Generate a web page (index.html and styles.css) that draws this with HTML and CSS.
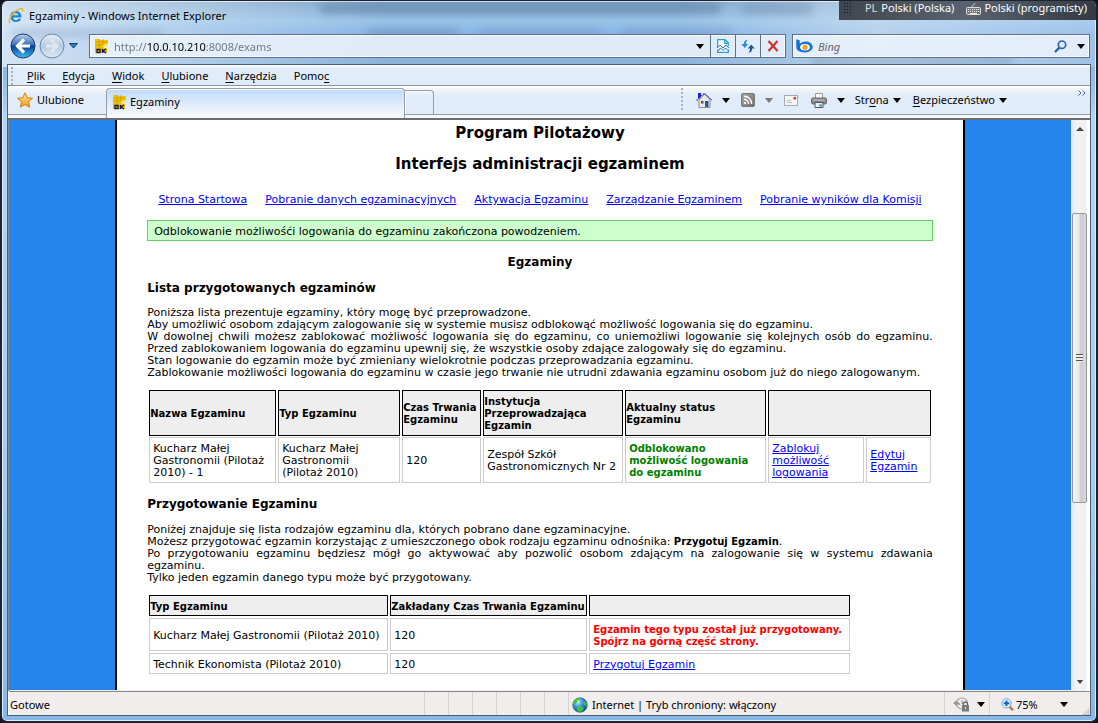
FILE: index.html
```html
<!DOCTYPE html>
<html lang="pl">
<head>
<meta charset="utf-8">
<title>Egzaminy - Windows Internet Explorer</title>
<link rel="stylesheet" href="styles.css">
</head>
<body>
<svg class="defs" width="0" height="0" aria-hidden="true">
  <defs>
    <symbol id="down" viewBox="0 0 8 5"><path d="M0 0h8L4 5z" fill="currentColor"/></symbol>
    <symbol id="oke" viewBox="0 0 16 16">
      <path d="M2 1h5v1h8v4l-4 1v3l-2 5H2z" fill="#f0c400"/>
      <path d="M2 4h12M2 7h9M6 1v9M10 1v6" stroke="#cf9c00" stroke-width=".8"/>
      <path d="M10 7h4v2h-4z" fill="#ffe36a"/>
      <rect x="2" y="10" width="12" height="5" fill="#e8bc00"/>
      <path d="M4 11.500h3v3H4zM9.500 11v4M13 11l-3 2 3 2" fill="none" stroke="#14145a" stroke-width="1.300"/>
    </symbol>
    <linearGradient id="gBack" x1="0" y1="0" x2="0" y2="1"><stop offset="0" stop-color="#b9d2ee"/><stop offset=".45" stop-color="#3a6fb8"/><stop offset=".5" stop-color="#0b3c90"/><stop offset="1" stop-color="#3fc0f5"/></linearGradient>
    <linearGradient id="gFwd" x1="0" y1="0" x2="0" y2="1"><stop offset="0" stop-color="#e6eef8"/><stop offset=".5" stop-color="#b6cbe2"/><stop offset="1" stop-color="#dce9f5"/></linearGradient>
    <linearGradient id="gGrey" x1="0" y1="0" x2="1" y2="1"><stop offset="0" stop-color="#aaa"/><stop offset="1" stop-color="#6d6d6d"/></linearGradient>
    <radialGradient id="gGlobe" cx=".35" cy=".3" r=".8"><stop offset="0" stop-color="#b6e4ff"/><stop offset=".5" stop-color="#2f86d2"/><stop offset="1" stop-color="#0c3d86"/></radialGradient>
    <linearGradient id="gStar" x1="0" y1="0" x2="0" y2="1"><stop offset="0" stop-color="#ffe9a0"/><stop offset="1" stop-color="#f59a10"/></linearGradient>
  </defs>
</svg>
<div class="window">
  <div class="glass" aria-hidden="true"><i class="smudge s1"></i><i class="smudge s2"></i><i class="smudge s3"></i><i class="smudge s4"></i><i class="smudge s5"></i><i class="smudge s6"></i><i class="smudge s7"></i></div>
  <header class="titlebar">
    <svg width="16" height="16" viewBox="0 0 16 16">
      <path d="M13.500 9.500H5.200c.2 3.300 4 3.500 5 1.300h3c-2.300 5.300-10.800 4-10.800-2.400 0-7 11-7.500 11.100 1.100zM5.300 7.300h5.100C10.300 4.400 5.500 4.400 5.300 7.300z" fill="#1b86d8"/>
      <path d="M2.200 15C-1 12.500 5 3.500 10.500 1.300 14-.2 15.600.9 14.400 3.600" fill="none" stroke="#efb52c" stroke-width="1.400"/>
    </svg>
    <span>Egzaminy - Windows Internet Explorer</span>
  </header>
  <div class="langbar">
    <i class="lang-grip"></i>
    <span class="lang-code">PL</span><span>Polski (Polska)</span>
    <svg width="15" height="13" viewBox="0 0 15 13"><path d="M6 5c0-3 3-1 3-4" fill="none" stroke="#ccc"/><rect x=".5" y="5.500" width="14" height="7" rx="1" fill="#777" stroke="#ddd"/><path d="M2 7.500h11M2 9.500h11" stroke="#eee" stroke-dasharray="1 1"/><path d="M4 11.500h7" stroke="#eee"/></svg>
    <span>Polski (programisty)</span>
  </div>
  <div class="address-row">
    <div class="nav-buttons">
      <button class="round" aria-label="Wstecz"><svg width="26" height="26" viewBox="0 0 26 26"><circle cx="13" cy="13" r="12" fill="url(#gBack)" stroke="#183a6d"/><path d="M14 6.500L7.500 13l6.500 6.500M8 13h12" fill="none" stroke="#fff" stroke-width="3.200"/></svg></button>
      <button class="round" aria-label="Dalej"><svg width="26" height="26" viewBox="0 0 26 26"><circle cx="13" cy="13" r="12" fill="url(#gFwd)" stroke="#6d87a5"/><path d="M12 7l6 6-6 6M18 13H7" fill="none" stroke="#dfe8f1" stroke-width="3"/></svg></button>
      <button class="history" aria-label="Ostatnie strony"><svg width="9" height="6" viewBox="0 0 9 6"><path d="M.5.5h8L4.500 5z" fill="#2e7fc6" stroke="#143a70"/></svg></button>
    </div>
    <div class="address field">
      <svg width="16" height="16"><use href="#oke"/></svg>
      <input class="url" type="text" aria-label="Adres" value="http://10.0.10.210:8008/exams">
      <button class="drop" aria-label="Lista adresów"><svg width="8" height="5"><use href="#down"/></svg></button>
      <button class="cell" aria-label="Widok zgodności"><svg width="12" height="14" viewBox="0 0 12 14"><path d="M.7 8V.7H8l3.300 3V7M.7 10.500v2.800h10.600v-3M7.700.7v3.600h3.600" fill="#fff" stroke="#2a9bc8" stroke-width="1.200"/><path d="M0 9l3-3 3 3 3-3 3 3M1 12l2.500-3L6 11.500 8.500 9l2.500 2.500" fill="none" stroke="#2d78b8"/></svg></button>
      <button class="cell" aria-label="Odśwież"><svg width="14" height="14" viewBox="0 0 14 14"><path d="M6.500 1C3.500 1 2.900 3 2.900 5H.3l3.500 4L7.300 5H5c0-1.600.3-2.800 1.500-4z" fill="#2d8bd6"/><path d="M7.500 13.500c3 0 3.600-2 3.600-4h2.600l-3.500-4-3.500 4H9c0 1.600-.3 2.800-1.500 4z" fill="#1a5aa5"/></svg></button>
      <button class="cell" aria-label="Zatrzymaj"><svg width="12" height="12" viewBox="0 0 12 12"><path d="M1.500 1l9 10M10.500 1l-9 10" stroke="#cf3030" stroke-width="2.200"/></svg></button>
    </div>
    <div class="search field">
      <svg width="17" height="14" viewBox="0 0 17 14"><path d="M.3.300l3.400 1v3.400C10-.2 16.700 3.600 16.700 8c0 3-3.300 5.400-8 5.400S.3 11.400.3 8z" fill="#1072d4"/><ellipse cx="9" cy="8.300" rx="4.800" ry="3.200" fill="#fff"/><circle cx="9" cy="8.300" r="2.600" fill="#f4a21b"/></svg>
      <input type="search" aria-label="Wyszukaj" placeholder="Bing">
      <button class="plain" aria-label="Szukaj"><svg width="13" height="13" viewBox="0 0 13 13"><circle cx="8" cy="4.700" r="3.700" fill="#d9ecfb" stroke="#2c68b0" stroke-width="1.700"/><path d="M5.200 7.700L1 12" stroke="#2c5aa0" stroke-width="2.200"/></svg></button>
      <button class="drop" aria-label="Opcje wyszukiwania"><svg width="8" height="5"><use href="#down"/></svg></button>
    </div>
  </div>
  <div class="frame">
    <nav class="menubar">
      <i class="grip"></i>
      <button><span><u>P</u>lik</span></button><button><span><u>E</u>dycja</span></button><button><span><u>W</u>idok</span></button><button><span><u>U</u>lubione</span></button><button><span><u>N</u>arzędzia</span></button><button><span>Pomo<u>c</u></span></button>
    </nav>
    <div class="tabrow">
      <button class="favorites"><svg width="16" height="16" viewBox="0 0 16 16"><path d="M8 .8l2.200 4.900 5.200.6-3.900 3.500 1.100 5.300L8 12.500l-4.600 2.600 1.100-5.300L.6 6.300l5.200-.6z" fill="url(#gStar)" stroke="#d07d10"/></svg>Ulubione</button>
      <button class="tab" role="tab" aria-selected="true"><svg width="16" height="16"><use href="#oke"/></svg>Egzaminy</button>
      <button class="newtab" aria-label="Nowa karta"></button>
      <div class="commands">
        <i class="grip"></i>
        <button class="c-home" aria-label="Strona główna"><svg width="16" height="16" viewBox="0 0 16 16"><path d="M3 8v7.500h11V7L8.500 2z" fill="#e8e8ea" stroke="#777" stroke-width=".8"/><path d="M2 1h3v4L2 7z" fill="#2222c8"/><path d="M.5 8.500L8.300 1.200l7.200 7" fill="none" stroke="#4a4ab0" stroke-width="1.300" stroke-dasharray="1.500 .7"/><path d="M9 9h3.500v6H9z" fill="#245a9c"/><path d="M5 9h2.500v2.500H5z" fill="#555"/></svg></button>
        <button class="c-drop" aria-label="Opcje strony głównej"><svg width="8" height="5"><use href="#down"/></svg></button>
        <button class="c-rss" aria-label="Kanały"><svg width="14" height="14" viewBox="0 0 14 14"><rect x=".5" y=".5" width="13" height="13" rx="1.500" fill="url(#gGrey)" stroke="#777"/><circle cx="4" cy="10" r="1.300" fill="#fff"/><path d="M3 6.300A4.700 4.700 0 0 1 7.700 11M3 3.300A7.700 7.700 0 0 1 10.700 11" fill="none" stroke="#fff" stroke-width="1.400"/></svg></button>
        <button class="c-drop dim" aria-label="Opcje kanałów"><svg width="8" height="5"><use href="#down"/></svg></button>
        <button class="c-mail" aria-label="Poczta"><svg width="14" height="11" viewBox="0 0 14 11"><rect x=".5" y=".5" width="13" height="10" fill="#f7f7f7" stroke="#aaa"/><path d="M9.500 2h2.500v2.500H9.500z" fill="#d33"/><path d="M3 5.500h4M3 7.500h5" stroke="#bbb"/></svg></button>
        <button class="c-print" aria-label="Drukuj"><svg width="16" height="15" viewBox="0 0 16 15"><path d="M4.500.5h7V6h-7z" fill="#fff" stroke="#999"/><rect x=".5" y="5" width="15" height="6" rx="1.500" fill="#888" stroke="#666"/><path d="M2 7h12" stroke="#ccc"/><path d="M4 9.500h8v5H4z" fill="#e7f1fa" stroke="#555"/><path d="M8 12.500h3" stroke="#28a0d8" stroke-width="2"/></svg></button>
        <button class="c-drop" aria-label="Opcje drukowania"><svg width="8" height="5"><use href="#down"/></svg></button>
        <button class="c-page"><span>Str<u>o</u>na</span><svg width="8" height="5"><use href="#down"/></svg></button>
        <button class="c-safe"><span><u>B</u>ezpieczeństwo</span><svg width="8" height="5"><use href="#down"/></svg></button>
        <button class="c-more" aria-label="Więcej"><svg width="8" height="6" viewBox="0 0 8 6"><path d="M.5.500L3 3 .5 5.500M4.500.5L7 3 4.500 5.500" fill="none" stroke="#4a5fa8"/></svg></button>
      </div>
    </div>
    <div class="viewport">
      <div class="page">
        <main class="sheet">
          <h1>Program Pilotażowy</h1>
          <h1>Interfejs administracji egzaminem</h1>
          <nav class="links">
            <a href="#start">Strona Startowa</a><a href="#dane">Pobranie danych egzaminacyjnych</a><a href="#aktywacja">Aktywacja Egzaminu</a><a href="#zarzadzanie">Zarządzanie Egzaminem</a><a href="#wyniki">Pobranie wyników dla Komisji</a>
          </nav>
          <p class="notice">Odblokowanie możliwośći logowania do egzaminu zakończona powodzeniem.</p>
          <h2 class="centered">Egzaminy</h2>
          <h2>Lista przygotowanych egzaminów</h2>
          <p class="text">Poniższa lista prezentuje egzaminy, który mogę być przeprowadzone.<br>
          Aby umożliwić osobom zdającym zalogowanie się w systemie musisz odblokowąć możliwość logowania się do egzaminu.<br>
          <span class="full">W dowolnej chwili możesz zablokować możliwość logowania się do egzaminu, co uniemożliwi logowanie się kolejnych osób do egzaminu.</span>
          Przed zablokowaniem logowania do egzaminu upewnij się, że wszystkie osoby zdające zalogowały się do egzaminu.<br>
          Stan logowanie do egzamin może być zmieniany wielokrotnie podczas przeprowadzania egzaminu.<br>
          Zablokowanie możliwości logowania do egzaminu w czasie jego trwanie nie utrudni zdawania egzaminu osobom już do niego zalogowanym.</p>
          <table class="exams">
            <colgroup><col class="w1"><col class="w2"><col class="w3"><col class="w4"><col class="w5"><col class="w6"><col class="w7"></colgroup>
            <tr><th>Nazwa Egzaminu</th><th>Typ Egzaminu</th><th>Czas Trwania Egzaminu</th><th>Instytucja Przeprowadzająca Egzamin</th><th>Aktualny status Egzaminu</th><th colspan="2"></th></tr>
            <tr><td>Kucharz Małej Gastronomii (Pilotaż 2010) - 1</td><td>Kucharz Małej Gastronomii (Pilotaż&nbsp;2010)</td><td>120</td><td>Zespół Szkół Gastronomicznych Nr 2</td><td class="ok">Odblokowano możliwość logowania do egzaminu</td><td><a href="#zablokuj">Zablokuj możliwość logowania</a></td><td><a href="#edytuj">Edytuj Egzamin</a></td></tr>
          </table>
          <h2>Przygotowanie Egzaminu</h2>
          <p class="text">Poniżej znajduje się lista rodzajów egzaminu dla, których pobrano dane egzaminacyjne.<br>
          Możesz przygotować egzamin korzystając z umieszczonego obok rodzaju egzaminu odnośnika: <b>Przygotuj Egzamin</b>.<br>
          <span class="full">Po przygotowaniu egzaminu będziesz mógł go aktywować aby pozwolić osobom zdającym na zalogowanie się w systemu zdawania</span>
          egzaminu.<br>
          Tylko jeden egzamin danego typu może być przygotowany.</p>
          <table class="types">
            <colgroup><col class="t1"><col class="t2"><col class="t3"></colgroup>
            <tr><th>Typ Egzaminu</th><th>Zakładany Czas Trwania Egzaminu</th><th></th></tr>
            <tr><td>Kucharz Małej Gastronomii (Pilotaż 2010)</td><td>120</td><td class="bad">Egzamin tego typu został już przygotowany. Spójrz na górną część strony.</td></tr>
            <tr><td>Technik Ekonomista (Pilotaż 2010)</td><td>120</td><td><a href="#przygotuj">Przygotuj Egzamin</a></td></tr>
          </table>
        </main>
      </div>
      <div class="scrollbar" aria-hidden="true">
        <svg class="arrow" width="8" height="4" viewBox="0 0 8 4"><path d="M0 4h8L4 0z" fill="#444"/></svg>
        <i class="before"></i><i class="thumb"><b></b></i><i class="after"></i>
        <svg class="arrow" width="8" height="4"><use href="#down"/></svg>
      </div>
    </div>
    <footer class="status">
      <span class="ready">Gotowe</span>
      <i></i><i></i><i></i><i></i><i></i><i></i>
      <span class="zone"><svg width="16" height="16" viewBox="0 0 16 16"><circle cx="8" cy="8" r="7.300" fill="url(#gGlobe)" stroke="#2a4f86" stroke-width=".6"/><path d="M2 4c2-3 5-3.500 6-2.500L7 4 4.500 5.500 3 8 1.200 7zM5 9.500l4-.5 3 2-2 3.500-4 .3-1.500-3zM12 4l2.500 2v4l-2-2-1.500-2z" fill="#3fc43c"/><path d="M5 3l3 1-2 2z" fill="#eafbd8" opacity=".8"/></svg>Internet | Tryb chroniony: włączony</span>
      <button class="privacy" aria-label="Ustawienia prywatności"><svg width="17" height="15" viewBox="0 0 17 15"><circle cx="9" cy="6.500" r="5.500" fill="#f2f2f2" stroke="#b5b5b5" stroke-width="1.500"/><path d="M9 3v4l3-2" fill="none" stroke="#888"/><path d="M0 6l4-3v2c2 0 3 1 4 4-1-1-2-1.500-4-1.500v2z" fill="#999"/><path d="M10.500 8.500V7a2 2 0 0 1 4 0v1.500" fill="none" stroke="#666" stroke-width="1.300"/><rect x="9" y="8" width="7" height="6.500" fill="#777"/><path d="M12.500 10v2.500" stroke="#ddd"/></svg><svg width="8" height="5"><use href="#down"/></svg></button>
      <button class="zoom"><svg width="13" height="13" viewBox="0 0 13 13"><path d="M8.500 8.500l3.500 3.700" stroke="#b07838" stroke-width="2.400"/><circle cx="5.500" cy="5.300" r="4.700" fill="#d8f0ff" stroke="#8aa4c0"/><path d="M5.500 2.500v5.600M2.700 5.300h5.600" stroke="#0f62c0" stroke-width="1.900"/></svg>75%<svg class="zoom-drop" width="8" height="5"><use href="#down"/></svg></button>
      <svg class="corner" width="8" height="8" viewBox="0 0 8 8"><path d="M6 0h2v2H6zM3 3h2v2H3zM6 3h2v2H6zM0 6h2v2H0zM3 6h2v2H3zM6 6h2v2H6z" fill="#b8b4b2"/></svg>
    </footer>
  </div>
</div>
</body>
</html>
```
FILE: styles.css
```css
* { box-sizing: border-box; }
body {
  margin: 0;
  background: #10131a;
  font: 11px/16px "Noto Sans", "Open Sans", sans-serif;
  color: #000;
  overflow: hidden;
}
.defs { position: absolute; }
button {
  display: flex;
  align-items: center;
  margin: 0;
  padding: 0;
  border: 0;
  background: none;
  font: inherit;
  color: inherit;
  white-space: nowrap;
}
svg { flex: none; display: block; }
u { text-underline-offset: 2px; }

.window {
  position: relative;
  display: flex;
  flex-direction: column;
  height: 100vh;
  padding: 0 5px 5px;
  border: 2px solid #1c2430;
  border-top-width: 1px;
  border-radius: 7px;
  overflow: hidden;
  background:
    linear-gradient(90deg, rgba(235,243,251,.75) 0, rgba(200,220,240,.5) 20%, rgba(160,195,230,0) 35%, rgba(160,195,230,0) 62%, rgba(205,222,240,.7) 80%, rgba(190,215,245,.4) 100%) 0 0 / 100% 66px no-repeat,
    linear-gradient(#7ea3c4 0, #9ac4e8 20px, #88b4e6 32px, #8db3da 64px, #b4d6f6 120px, #a5cbf0 500px, #86b8e8 100%);
  box-shadow: inset 0 0 0 1px #dbeeff;
}
.glass { position: absolute; inset: 0 0 auto; height: 64px; overflow: hidden; }
.smudge { position: absolute; filter: blur(4px); background: #54749a; opacity: .55; }
.s1 { left: 318px; top: 3px; width: 400px; height: 9px; }
.s2 { left: 10px; top: 29px; width: 150px; height: 6px; opacity: .3; }
.s3 { left: 366px; top: 29px; width: 90px; height: 5px; }
.s4 { left: 478px; top: 29px; width: 120px; height: 5px; opacity: .4; }
.s5 { left: 620px; top: 29px; width: 110px; height: 5px; opacity: .4; }
.s6 { left: 810px; top: 57px; width: 200px; height: 6px; opacity: .4; }
.s7 { left: 740px; top: 3px; width: 70px; height: 10px; opacity: .35; }

.titlebar {
  position: relative;
  display: flex;
  align-items: center;
  gap: 5px;
  height: 29px;
  padding-left: 1px;
}
.langbar {
  position: absolute;
  top: 0;
  right: 0;
  display: flex;
  align-items: center;
  height: 19px;
  padding: 0 9px 5px 4px;
  color: #fff;
  background: linear-gradient(90deg, #40464f, #59636f 50%, #343a42);
}
.lang-grip { width: 8px; height: 12px; margin-right: 14px; background: radial-gradient(circle, #11151a 1px, transparent 1px) 0 0 / 3px 3px; }
.lang-code { margin-right: 4px; color: #ddd; }
.langbar svg { margin: 0 3px 0 12px; }

.address-row { position: relative; display: flex; align-items: center; gap: 4px; height: 34px; padding-bottom: 2px; }
.nav-buttons {
  display: flex;
  align-items: center;
  gap: 3px;
  width: 78px;
  padding-left: 3px;
}
.history { padding-left: 1px; }
.field {
  display: flex;
  align-items: center;
  height: 24px;
  border: 1px solid #5d7288;
  box-shadow: inset 0 0 0 1px rgba(255,255,255,.7);
  background: rgba(238,244,251,.85);
}
.field input { flex: 1; min-width: 0; border: 0; padding: 2px 0 0; outline: 0; background: none; font: inherit; }
.address { flex: 1; padding-left: 3px; }
.field .url {
  margin-left: 5px;
  color: transparent;
  background: linear-gradient(90deg, #6d7680 33px, #000 33px, #000 92px, #6d7680 92px);
  -webkit-background-clip: text;
  background-clip: text;
}
.drop { height: 100%; padding: 0 5px; }
.cell { justify-content: center; width: 25px; height: 100%; border-left: 1px solid #5d7288; }
.address .drop { padding: 0 6px; }
.search { flex: 0 0 298px; margin: 0 1px 0 2px; padding-left: 3px; }
.field [type="search"] { margin-left: 5px; font-style: italic; }
.search input::placeholder { color: #666; opacity: 1; }
.search .drop { padding: 0 4px 0 10px; }

.frame {
  position: relative;
  flex: 1;
  min-height: 0;
  display: flex;
  flex-direction: column;
  border: 1px solid #4f5f70;
  background: #fff;
}
.menubar {
  display: flex;
  align-items: center;
  height: 21px;
  flex: none;
  gap: 17px;
  padding-top: 1px;
  border-bottom: 1px solid #8c9399;
  background: linear-gradient(#f6fafe, #e0ecf9 4px, #e0ecf9);
}
.grip { align-self: center; width: 2px; height: 18px; background: repeating-linear-gradient(#a9b0b8 0 2px, transparent 2px 4px); }
.menubar .grip { margin: 0 -3px 0 3px; }
.tabrow {
  display: flex;
  align-items: flex-start;
  flex: none;
  height: 34px;
  padding-top: 2px;
  border-bottom: 2px solid #6a6d72;
  background: linear-gradient(#fff, #f0f5fb 3px, #e0ecf9 10px, #e0ecf9 28px, #f5f8fb 29px);
}
.favorites, .tab, .newtab { border: 1px solid #979ca6; }
.favorites { width: 98px; height: 27px; gap: 4px; padding: 0 0 2px 9px; border-width: 0 0 1px; }
.tab {
  width: 299px;
  height: 30px;
  gap: 3px;
  padding: 0 0 3px 4px;
  border-bottom: 0;
  border-radius: 4px 4px 0 0;
  background: linear-gradient(#c0dafb, #e3eefc 60%, #f5f8fb 90%);
  box-shadow: inset 0 1px 0 #fff;
}
.newtab { width: 29px; height: 25px; margin-top: 2px; border-left: 0; border-radius: 0 4px 0 0; box-shadow: inset 1px 1px 0 #fff; }
.commands { flex: 1; display: flex; align-items: center; justify-content: flex-end; height: 27px; padding-bottom: 2px; border-bottom: 1px solid #979ca6; }
.commands .grip { margin-right: 13px; height: 24px; align-self: flex-start; }
.c-drop { width: 29px; padding-left: 10px; }
.dim { color: #777; }
.c-mail { width: 27px; }
.c-print { width: 16px; }
.c-page, .c-safe { gap: 4px; }
.c-page { margin-right: 12px; margin-left: -1px; }
.c-more { align-self: flex-start; height: 10px; margin: 0 4px 0 71px; }

.viewport { flex: 1; min-height: 0; display: flex; border-left: 1px solid #888; }
.page { flex: 1; display: flex; justify-content: center; overflow: hidden; background: #2486ec; border-bottom: 1px solid #eee; }
.sheet {
  width: 80%;
  min-height: 100%;
  align-self: flex-start;
  padding: 4px 30px 16px;
  border: solid #000;
  border-width: 0 2px;
  background: #fff;
  font: 11px/12px "DejaVu Sans", Verdana, sans-serif;
}
.sheet a { color: #00f; }
h1 { margin: 0 0 13px; font-size: 15px; line-height: 18px; text-align: center; }
.links { display: flex; justify-content: center; gap: 18px; padding-top: 8px; white-space: nowrap; }
.notice { margin: 14px 0; padding: 5px 6px 2px; border: 1px solid #6c6; background: #cfc; }
h2 { margin: 0; font-size: 12px; line-height: 14px; }
.centered { margin-bottom: 12px; text-align: center; }
.text { margin: 12px 0 10px; text-align: justify; }
.exams ~ .text { margin: 13px 0 9px; }
.text b { font-size: 10px; line-height: 10px; }
.full { display: block; text-align-last: justify; }
table { border-spacing: 2px; table-layout: fixed; }
th { padding: 2px 0 0; border: 1px solid #000; background: #eee; font-size: 10px; text-align: left; }
td { padding: 4px 3px 2px; border: 1px solid #ccc; }
.exams { width: 100%; margin-bottom: 13px; border-spacing: 2px 1px; }
.exams tr { height: 46px; }
.w1 { width: 127px; } .w2 { width: 122px; } .w3 { width: 79px; } .w4 { width: 140px; }
.w5 { width: 141px; } .w6 { width: 96px; }
.types { width: 705px; }
.types tr { height: 21px; }
.types tr:nth-child(2) { height: 33px; }
.t1 { width: 239px; } .t2 { width: 197px; }
.ok, .bad { font-size: 10px; font-weight: bold; }
.ok { color: #008000; }
.bad { color: #f00; }

.scrollbar { width: 19px; display: flex; flex-direction: column; align-items: center; padding: 0 3px 0 1px; background: linear-gradient(90deg, #e6e6e6, #f2f2f2 5px, #f0f0f0 15px, #fff 16px); color: #444; }
.arrow { margin: 7px 0; }
.before { flex: 75; }
.thumb { flex: 290; width: 100%; display: flex; align-items: center; justify-content: center; border: 1px solid #979797; border-radius: 2px; background: linear-gradient(90deg, #f5f5f5, #e9e9eb 45%, #c9c9cf 60%, #d8d8dc); }
.thumb b { width: 7px; height: 8px; background: repeating-linear-gradient(#555 0 1px, #eee 1px 3px); }
.after { flex: 171; }

.status { display: flex; align-items: stretch; flex: none; height: 24px; margin-left: 1px; border-top: 1px solid #8a8a8a; background: #f1edec; }
.status > * { display: flex; align-items: center; padding-top: 2px; }
.status i { width: 24px; }
.status i, .zone, .privacy, .zoom { border-left: 1px solid #d5d2d0; }
.ready { flex: 1; padding-left: 1px; }
.zone { width: 376px; gap: 4px; padding-left: 3px; }
.privacy { width: 45px; gap: 7px; padding-left: 8px; }
.zoom { width: 93px; gap: 2px; padding-left: 11px; }
.zoom-drop { margin-left: 20px; }
.status .corner { align-self: flex-end; }
```
